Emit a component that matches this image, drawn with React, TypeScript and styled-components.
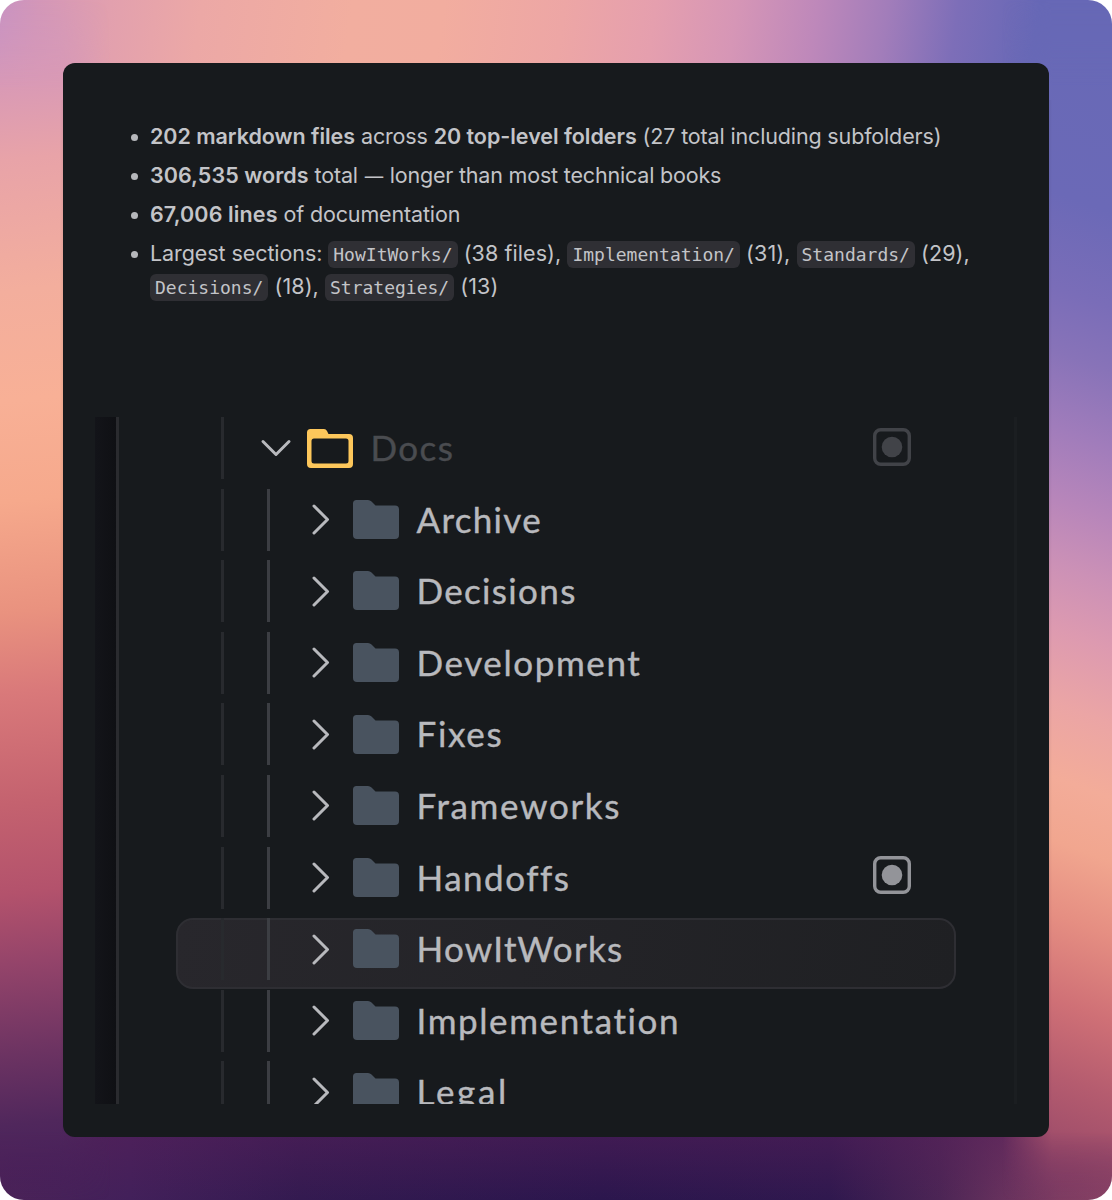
import React from "react";
import styled, { createGlobalStyle } from "styled-components";

const Global = createGlobalStyle`
  * { box-sizing: border-box; }
  body { margin: 0; background: #fff; }
`;

const Backdrop = styled.div`
  position: relative;
  width: 1112px;
  height: 1200px;
  padding: 63px;
  border-radius: 24px;
  overflow: hidden;
  isolation: isolate;
  background:
    linear-gradient(180deg, rgba(88, 32, 90, 0.5), rgba(88, 32, 90, 0)) 0 100% / 100% 68px no-repeat,
    linear-gradient(98deg, #c993c2 0, #d497b8 40px, #e2a0ae 110px, #eca8a6 200px, #f2ae9f 350px, #f2ad9f 440px, #eda6a5 560px, #e59fae 650px, #d696b6 730px, #be88ba 810px, #a27dba 880px, #7d6eb8 950px, #6768b6 1030px) 0 0 / 100% 100px no-repeat,
    linear-gradient(90deg, #4a2358 0, #42205a 130px, #331a50 300px, #2b164d 600px, #2f184e 830px, #4c2555 940px, #6a335e 1010px, #7e3c62 1060px, #884264 1112px) 0 100% / 100% 100px no-repeat,
    #171a1d;
  &::before,
  &::after {
    content: "";
    position: absolute;
    z-index: -1;
    top: 0;
    width: 120px;
    height: 1200px;
    mask-composite: intersect;
  }
  &::before {
    left: 0;
    background: linear-gradient(174deg, #cc96c0 0, #d899b6 80px, #e8a3a8 160px, #f3ae9d 290px, #f8b096 400px, #f6a98c 500px, #e9927f 610px, #d9797a 690px, #c4626f 800px, #b3526c 890px, #94446a 960px, #6c3362 1050px, #50275c 1120px, #45205a 1180px);
    mask-image: linear-gradient(90deg, #000 60px, transparent 110px), linear-gradient(180deg, transparent 0, #000 90px, #000 1132px, transparent 1200px);
  }
  &::after {
    right: 0;
    background: linear-gradient(200deg, #6769b6 0, #6b69b7 200px, #7a6db8 290px, #8873b8 350px, #a07cbb 420px, #b886ba 490px, #cc91b6 550px, #dd9ab0 610px, #eba5a5 680px, #f3ac99 750px, #f1a68f 810px, #e58e82 880px, #cf7076 960px, #b55c6f 1030px, #9a4a69 1110px, #85406a 1180px);
    mask-image: linear-gradient(270deg, #000 60px, transparent 110px), linear-gradient(180deg, transparent 0, #000 90px, #000 1132px, transparent 1200px);
  }
`;

const Card = styled.main`
  display: flex;
  flex-direction: column;
  width: 986px;
  height: 1074px;
  padding: 57px 32px 0;
  border-radius: 12px;
  background: #171a1d;
  overflow: hidden;
`;

const Summary = styled.ul`
  display: flex;
  flex-direction: column;
  gap: 6px;
  height: 297px;
  margin: 0;
  padding: 0 0 0 55px;
  list-style: none;
  font: 400 21.5px/33px Inter, "Liberation Sans", sans-serif;
  letter-spacing: -0.15px;
  color: #c3c4c8;
`;

const Item = styled.li`
  display: flex;
  height: 33px;
  white-space: nowrap;
  &::before {
    content: "";
    flex: none;
    width: 7px;
    height: 7px;
    margin: 14px 12px 0 -19px;
    border-radius: 50%;
    background: #b6b7bb;
  }
`;

const Bold = styled.strong<{ $spacing?: number }>`
  font-weight: 600;
  letter-spacing: ${(p) => p.$spacing ?? -0.04}px;
`;

const Dash = styled.span`
  display: inline-block;
  width: 20px;
  font-size: 18.5px;
  line-height: 1;
  text-align: center;
`;

const Spaced = styled.span<{ $spacing: number }>`
  letter-spacing: ${(p) => p.$spacing}px;
`;

const Code = styled.code`
  padding: 3px 5px;
  border-radius: 6px;
  background: #2f2f34;
  font: 400 18px/1 "DejaVu Sans Mono", "Liberation Mono", monospace;
  letter-spacing: 0;
  vertical-align: 0.5px;
`;

const Explorer = styled.section`
  display: flex;
  width: 922px;
  height: 687px;
  overflow: hidden;
`;

const Gutter = styled.div`
  flex: none;
  width: 24px;
  border-right: 3px solid #2a2b2f;
  background: linear-gradient(90deg, #131419, #0f1014);
`;

const Tree = styled.div`
  flex: none;
  width: 898px;
  border-right: 3px solid #1b1e21;
`;

const Row = styled.div<{ $active?: boolean }>`
  position: relative;
  display: flex;
  align-items: flex-start;
  width: 780px;
  height: 71.6px;
  margin-left: 57px;
  &::before {
    content: "";
    display: ${(p) => (p.$active ? "block" : "none")};
    position: absolute;
    inset: 0 0 1px;
    border: 2px solid #2e2e33;
    border-radius: 17px;
    background: linear-gradient(100deg, #28272c, #1f2023);
  }
`;

const Guide = styled.i<{ $bright?: boolean; $x: number }>`
  flex: none;
  position: relative;
  width: 3px;
  height: 62px;
  margin-left: ${(p) => p.$x}px;
  background: ${(p) => (p.$bright ? "#3c3e43" : "#282a2e")};
`;

const Toggle = styled.svg<{ $gap: number }>`
  flex: none;
  position: relative;
  width: 32px;
  height: 32px;
  margin: 15.5px 0 0 ${(p) => p.$gap}px;
`;

const FolderIcon = styled.svg<{ $gap: number; $top: number }>`
  flex: none;
  position: relative;
  width: 46px;
  height: 40px;
  margin: ${(p) => p.$top}px 0 0 ${(p) => p.$gap}px;
`;

const Label = styled.span<{ $dim?: boolean; $spacing: number }>`
  position: relative;
  margin-left: 17.5px;
  font: 400 35px/60px Lato, "Open Sans", sans-serif;
  letter-spacing: ${(p) => p.$spacing}px;
  font-variant-ligatures: none;
  color: ${(p) => (p.$dim ? "#4a4c50" : "#b8b9bd")};
  -webkit-text-stroke: 0.4px currentColor;
`;

const Marker = styled.svg<{ $dim?: boolean }>`
  position: relative;
  width: 38px;
  height: 38px;
  margin: ${(p) => (p.$dim ? 11 : 9.5)}px 45px 0 auto;
  color: ${(p) => (p.$dim ? "#414348" : "#939499")};
`;

const TargetMark = ({ dim }: { dim?: boolean }) => (
  <Marker $dim={dim} viewBox="0 0 38 38" fill="none">
    <rect x="1.7" y="1.7" width="34.6" height="34.6" rx="6" stroke="currentColor" strokeWidth="3.4" />
    <circle cx="19" cy="19" r="10.3" fill="currentColor" />
  </Marker>
);

const folders = [
  { name: "Archive", spacing: 1.3 },
  { name: "Decisions", spacing: 1.35 },
  { name: "Development", spacing: 1.6 },
  { name: "Fixes", spacing: 1.7 },
  { name: "Frameworks", spacing: 1.65 },
  { name: "Handoffs", spacing: 1.5, marked: true },
  { name: "HowItWorks", spacing: 1.3, active: true },
  { name: "Implementation", spacing: 1.6 },
  { name: "Legal", spacing: 2.7 },
];

export default function App() {
  return (
    <Backdrop>
      <Global />
      <Card>
        <Summary>
          <Item>
            <span><Bold>202 markdown files</Bold> across <Bold>20 top-level folders</Bold> (27 total including subfolders)</span>
          </Item>
          <Item>
            <span><Bold $spacing={0.06}>306,535 words</Bold> total <Dash>—</Dash><Spaced $spacing={-0.19}> longer than most technical books</Spaced></span>
          </Item>
          <Item>
            <span><Bold $spacing={0.12}>67,006 lines</Bold> of documentation</span>
          </Item>
          <Item>
            <span>
              <Spaced $spacing={-0.08}>Largest sections: </Spaced>
              <Spaced $spacing={0.08}>
                <Code>HowItWorks/</Code> (38 files), <Code>Implementation/</Code> (31), <Code>Standards/</Code> (29),<br />
                <Code>Decisions/</Code> (18), <Code>Strategies/</Code> (13)
              </Spaced>
            </span>
          </Item>
        </Summary>
        <Explorer>
          <Gutter />
          <Tree>
            <Row>
              <Guide $x={45} />
              <Toggle $gap={36} viewBox="0 0 32 32" fill="none" stroke="#b8b9bd" strokeWidth="3" strokeLinecap="round" strokeLinejoin="round">
                <path d="M3 8.5 16 21.5 29 8.5" />
              </Toggle>
              <FolderIcon $gap={15} $top={11.5} viewBox="0 0 46 40">
                <path fill="#fdc75b" fillRule="evenodd" d="M3.5 0H17q2 0 3 2l1.500 3H42q4 0 4 4v26q0 4-4 4H4q-4 0-4-4V3.500Q0 0 3.500 0ZM7 9.500q-2.500 0-2.500 2.500V32q0 2.500 2.500 2.500h32q2.500 0 2.500-2.500V12q0-2.500-2.500-2.500Z" />
              </FolderIcon>
              <Label $dim $spacing={1.4}>Docs</Label>
              <TargetMark dim />
            </Row>
            {folders.map((f) => (
              <Row key={f.name} $active={f.active}>
                <Guide $x={45} />
                <Guide $bright $x={43} />
                <Toggle $gap={34} viewBox="0 0 32 32" fill="none" stroke="#b8b9bd" strokeWidth="3" strokeLinecap="round" strokeLinejoin="round">
                  <path d="M10 2 23.500 15.500 10 29" />
                </Toggle>
                <FolderIcon $gap={17} $top={11.2} viewBox="0 0 46 40">
                  <path fill="#49535f" d="M3.500 0H15q2 0 3.500 1.500l4 4H42q4 0 4 4V35q0 4-4 4H4q-4 0-4-4V3.500Q0 0 3.500 0Z" />
                </FolderIcon>
                <Label $spacing={f.spacing}>{f.name}</Label>
                {f.marked && <TargetMark />}
              </Row>
            ))}
          </Tree>
        </Explorer>
      </Card>
    </Backdrop>
  );
}
